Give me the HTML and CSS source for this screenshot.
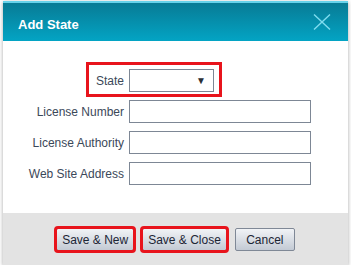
FILE: index.html
```html
<!DOCTYPE html>
<html>
<head>
    <title>Add State</title>
    <link rel="stylesheet" href="styles.css">
</head>
<body>
    <div class="dialog">
        <div class="dialog-header">
            <h1 class="dialog-title">Add State</h1>
            <button class="close-button" aria-label="Close">
                <svg width="18" height="16" viewBox="0 0 18 16">
                    <path d="M1 0.5 L17 15.5 M17 0.5 L1 15.5" stroke="#7fdcef" stroke-width="1.4" fill="none"/>
                </svg>
            </button>
        </div>

        <div class="dialog-body">
            <div class="field field-marked">
                <label class="field-label">State</label>
                <div class="select-box">
                    <span class="select-arrow">&#9660;</span>
                </div>
            </div>
            <div class="field">
                <label class="field-label">License Number</label>
                <input class="text-input" type="text">
            </div>
            <div class="field">
                <label class="field-label">License Authority</label>
                <input class="text-input" type="text">
            </div>
            <div class="field">
                <label class="field-label">Web Site Address</label>
                <input class="text-input" type="text">
            </div>
        </div>

        <div class="dialog-footer">
            <button class="btn btn-marked">Save &amp; New</button>
            <button class="btn btn-marked">Save &amp; Close</button>
            <button class="btn btn-cancel">Cancel</button>
        </div>
    </div>
</body>
</html>
```

FILE: styles.css
```css
body {
    margin: 0;
    padding: 1px 3px 0 3px;
    background-color: #ffffff;
    font-family: "Liberation Sans", Arial, sans-serif;
}

.dialog {
    width: 345px;
    box-shadow: 0 1px 4px rgba(0, 0, 0, 0.35);
}

.dialog-header {
    height: 38px;
    border-top: 2px solid #66d2ea;
    background: linear-gradient(to bottom, #087b95, #03a4c4);
    display: flex;
    justify-content: space-between;
}

.dialog-title {
    margin: 0;
    padding: 4px 0 0 15px;
    align-self: center;
    color: #ffffff;
    font-size: 13px;
    font-weight: bold;
}

.close-button {
    margin: 11px 17px 0 0;
    padding: 0;
    width: 18px;
    height: 16px;
    border: none;
    background: none;
    align-self: flex-start;
}

.close-button svg {
    display: block;
}

.dialog-body {
    background-color: #ffffff;
    padding: 28px 0 28px 0;
    display: flex;
    flex-direction: column;
    gap: 8px;
}

.field {
    display: flex;
    align-items: center;
    gap: 5px;
    position: relative;
}

.field-label {
    width: 121px;
    text-align: right;
    font-size: 12px;
    color: #3b4859;
}

/* red highlight frame drawn over the State row */
.field-marked::before {
    content: "";
    position: absolute;
    left: 83px;
    top: -7px;
    width: 130px;
    height: 29px;
    border: 3px solid #e8141c;
}

.select-box {
    box-sizing: border-box;
    width: 85px;
    height: 23px;
    border: 1px solid #7d8795;
    background-color: #ffffff;
    display: flex;
    align-items: center;
    justify-content: flex-end;
    padding-right: 7px;
}

.select-arrow {
    font-size: 10px;
    color: #2b2f36;
}

.text-input {
    box-sizing: border-box;
    width: 182px;
    height: 23px;
    margin: 0;
    border: 1px solid #7d8795;
    padding: 2px 4px;
    font-family: inherit;
}

.dialog-footer {
    background-color: #e3e3e3;
    padding: 15px 0 14px 0;
    display: flex;
    justify-content: center;
    gap: 8px;
}

.btn {
    box-sizing: border-box;
    height: 23px;
    min-width: 60px;
    padding: 0 5px;
    border: 1px solid #7f8896;
    border-radius: 2px;
    background: linear-gradient(to bottom, #f1f3f6, #c3cad4);
    color: #1c2535;
    font-family: "Liberation Sans", Arial, sans-serif;
    font-size: 12px;
}

.btn-marked {
    outline: 3px solid #e8141c;
    outline-offset: -1px;
}
```
